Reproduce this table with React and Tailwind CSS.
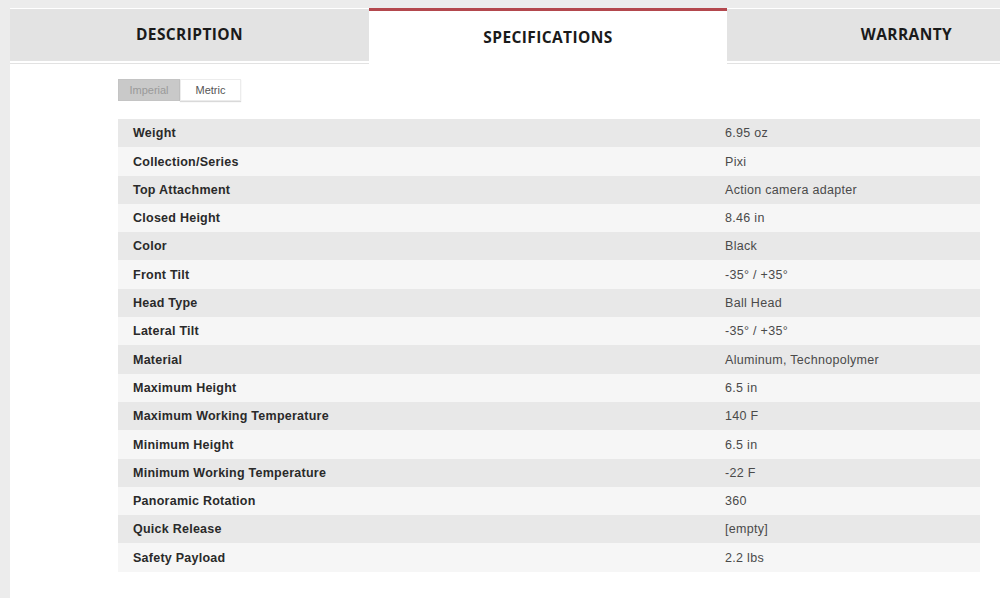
import React, { useState } from 'react';

const specs = [
  ['Weight', '6.95 oz'],
  ['Collection/Series', 'Pixi'],
  ['Top Attachment', 'Action camera adapter'],
  ['Closed Height', '8.46 in'],
  ['Color', 'Black'],
  ['Front Tilt', '-35° / +35°'],
  ['Head Type', 'Ball Head'],
  ['Lateral Tilt', '-35° / +35°'],
  ['Material', 'Aluminum, Technopolymer'],
  ['Maximum Height', '6.5 in'],
  ['Maximum Working Temperature', '140 F'],
  ['Minimum Height', '6.5 in'],
  ['Minimum Working Temperature', '-22 F'],
  ['Panoramic Rotation', '360'],
  ['Quick Release', '[empty]'],
  ['Safety Payload', '2.2 lbs'],
];

const tabs = ['DESCRIPTION', 'SPECIFICATIONS', 'WARRANTY'];

export default function App() {
  const [active, setActive] = useState('SPECIFICATIONS');
  const [unit, setUnit] = useState('imperial');

  return (
    <div className="w-[1000px] h-[598px] overflow-hidden bg-[#ececec] pt-2 pl-[10px]">
      <div className="w-[1100px] h-full bg-white">
        {/* tabs */}
        <div className="flex items-start h-[56px] border-b border-[#e2e2e2]">
          {tabs.map((t) => {
            const on = t === active;
            return (
              <button
                key={t}
                onClick={() => setActive(t)}
                className={
                  on
                    ? 'w-[358px] h-[56px] bg-white border-t-[3px] border-[#b3474d] text-[15.5px] font-bold tracking-[0.4px] text-[#1a1a1a] pt-[1px]'
                    : 'w-[359px] h-[52px] mt-[1px] bg-[#e3e3e3] text-[15.5px] font-bold tracking-[0.4px] text-[#1a1a1a]'
                }
                style={{ fontFamily: '"Open Sans", sans-serif' }}
              >
                {t}
              </button>
            );
          })}
        </div>

        <div className="pl-[108px] pt-[15px] w-[970px]" style={{ fontFamily: '"Liberation Sans", Arial, sans-serif' }}>
          {/* unit toggle */}
          <div className="flex h-[22px] text-[11px]">
            <button
              onClick={() => setUnit('imperial')}
              className={
                unit === 'imperial'
                  ? 'w-[62px] bg-[#c9c9c9] text-[#9a9a9a] border border-[#c4c4c4]'
                  : 'w-[62px] bg-white text-[#555] border border-[#e2e2e2] shadow-[0_1px_1px_rgba(0,0,0,0.12)]'
              }
            >
              Imperial
            </button>
            <button
              onClick={() => setUnit('metric')}
              className={
                unit === 'metric'
                  ? 'w-[61px] bg-[#c9c9c9] text-[#9a9a9a] border border-[#c4c4c4]'
                  : 'w-[61px] bg-white text-[#555] border border-[#ececec] shadow-[0_1px_1px_rgba(0,0,0,0.15)]'
              }
            >
              Metric
            </button>
          </div>

          {/* table */}
          <div className="mt-[18px]">
            {specs.map(([k, v], i) => (
              <div
                key={k}
                className={`flex h-[28.3px] items-center ${i % 2 === 0 ? 'bg-[#e8e8e8]' : 'bg-[#f6f6f6]'}`}
              >
                <div className="w-[607px] pl-[15px] pt-[1px] text-[12.5px] font-bold tracking-[0.25px] text-[#2a2a2a]">{k}</div>
                <div className="pt-[1px] text-[12.5px] tracking-[0.3px] text-[#4a4a4a]">{v}</div>
              </div>
            ))}
          </div>
        </div>
      </div>
    </div>
  );
}
